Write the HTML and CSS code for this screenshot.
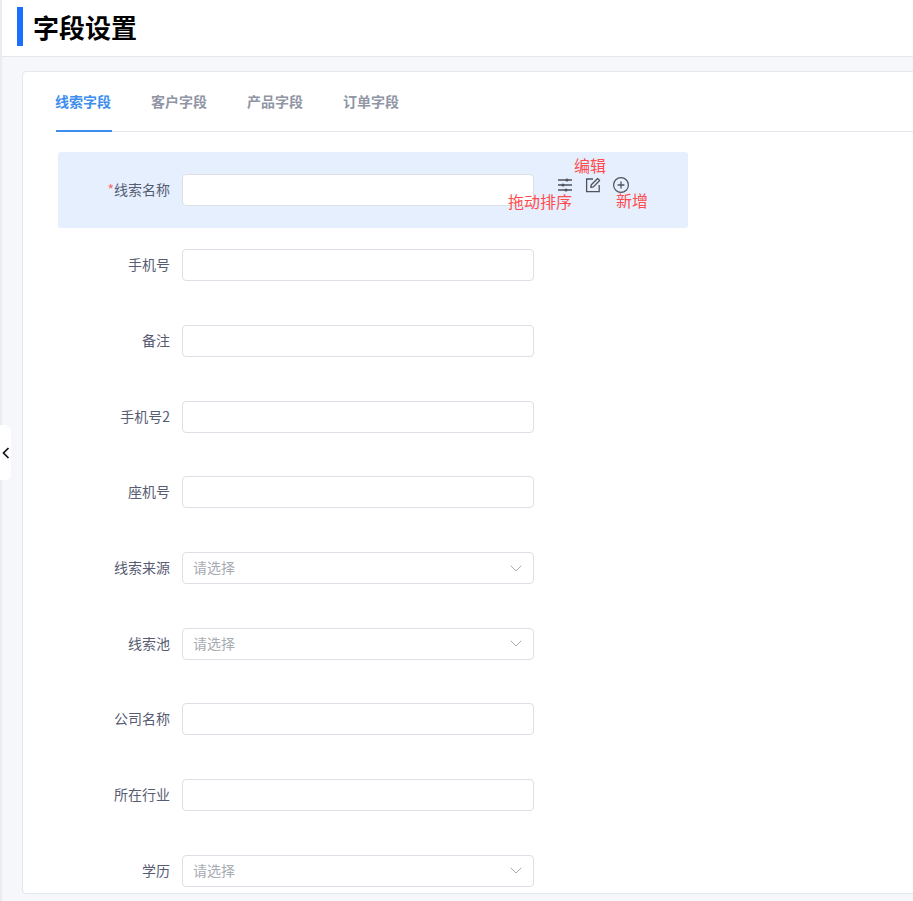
FILE: index.html
```html
<!DOCTYPE html>
<html lang="zh-CN">
<head>
<meta charset="utf-8">
<title>字段设置</title>
<link rel="stylesheet" href="styles.css">
</head>
<body>
<div class="app">
  <header class="page-head">
    <span class="head-bar"></span>
    <h1 class="page-title">字段设置</h1>
  </header>
  <main class="content">
    <section class="card">
      <nav class="tabs">
        <a class="tab active">线索字段</a>
        <a class="tab">客户字段</a>
        <a class="tab">产品字段</a>
        <a class="tab">订单字段</a>
      </nav>
      <div class="form">
        <div class="row highlight">
          <label class="label"><span class="req">*</span>线索名称</label>
          <div class="input"></div>
          <div class="tools">
            <svg class="tool" width="16" height="16" viewBox="0 0 16 16" fill="none" stroke="#50535c" stroke-width="1.3"><path d="M1 3h14M1 8h14M1 13h14"/><circle cx="10" cy="3" r="1.6" fill="#50535c" stroke="none"/><circle cx="6" cy="8" r="1.6" fill="#50535c" stroke="none"/><circle cx="9" cy="13" r="1.6" fill="#50535c" stroke="none"/></svg>
            <svg class="tool" width="16" height="16" viewBox="0 0 16 16" fill="none" stroke="#50535c" stroke-width="1.3"><path d="M8 2H1.6v12.6h12.6V8"/><path d="M5.8 10.4l.5-2.6L12.6 1.5l2 2-6.2 6.4z" stroke-linejoin="round"/></svg>
            <svg class="tool" width="16" height="16" viewBox="0 0 16 16" fill="none" stroke="#50535c" stroke-width="1.2"><circle cx="8" cy="8" r="7.4"/><path d="M8 4.6v6.8M4.6 8h6.8" stroke-width="1.3"/></svg>
          </div>
          <span class="note note-edit">编辑</span>
          <span class="note note-drag">拖动排序</span>
          <span class="note note-add">新增</span>
        </div>
        <div class="row"><label class="label">手机号</label><div class="input"></div></div>
        <div class="row"><label class="label">备注</label><div class="input"></div></div>
        <div class="row"><label class="label">手机号2</label><div class="input"></div></div>
        <div class="row"><label class="label">座机号</label><div class="input"></div></div>
        <div class="row"><label class="label">线索来源</label><div class="input select"><span class="placeholder">请选择</span><svg class="caret" width="12" height="7" viewBox="0 0 12 7" fill="none" stroke="#a8abb2" stroke-width="1"><path d="M.7.7L6 6l5.3-5.3"/></svg></div></div>
        <div class="row"><label class="label">线索池</label><div class="input select"><span class="placeholder">请选择</span><svg class="caret" width="12" height="7" viewBox="0 0 12 7" fill="none" stroke="#a8abb2" stroke-width="1"><path d="M.7.7L6 6l5.3-5.3"/></svg></div></div>
        <div class="row"><label class="label">公司名称</label><div class="input"></div></div>
        <div class="row"><label class="label">所在行业</label><div class="input"></div></div>
        <div class="row"><label class="label">学历</label><div class="input select"><span class="placeholder">请选择</span><svg class="caret" width="12" height="7" viewBox="0 0 12 7" fill="none" stroke="#a8abb2" stroke-width="1"><path d="M.7.7L6 6l5.3-5.3"/></svg></div></div>
      </div>
    </section>
  </main>
  <button class="collapse" type="button" aria-label="收起">
    <svg width="8" height="12" viewBox="0 0 8 12" fill="none" stroke="#111" stroke-width="1.7"><path d="M6.5 1L1.5 6l5 5"/></svg>
  </button>
</div>
</body>
</html>
```
FILE: styles.css
```css
* { box-sizing: border-box; }
html, body { margin: 0; height: 100%; overflow: hidden; }
body {
  font-family: "Noto Sans CJK SC", "Noto Sans", sans-serif;
  font-size: 14px;
  background: #f5f7fa;
}
.app {
  position: relative;
  height: 901px;
  border-left: 2px solid #e9ecf1;
  display: flex;
  flex-direction: column;
}
.page-head {
  height: 57px;
  flex: none;
  background: #fff;
  border-bottom: 1px solid #e4e7ed;
  display: flex;
  align-items: flex-start;
  padding: 7px 0 0 15px;
}
.head-bar { width: 6px; height: 39px; background: #1a6fff; flex: none; }
.page-title {
  margin: 0 0 0 10px;
  font-size: 26px;
  line-height: 39px;
  font-weight: 700;
  color: #000;
}
.content { flex: 1; padding: 14px 0 7px 20px; min-height: 0; }
.card {
  height: 100%;
  width: 900px;
  background: #fff;
  border: 1px solid #e4e7ed;
  border-radius: 4px;
  overflow: hidden;
  padding: 0 0 0 33px;
}
.tabs {
  display: flex;
  gap: 40px;
  height: 60px;
  border-bottom: 1px solid #e4e7ed;
}
.tab {
  height: 60px;
  line-height: 59px;
  font-size: 14px;
  font-weight: 700;
  color: #9096a5;
  width: 56px;
  text-indent: -1px;
  white-space: nowrap;
}
.tab.active { color: #3d8eef; border-bottom: 2px solid #3d8eef; }
.form { padding: 20px 0 0 2px; width: 632px; }
.row {
  position: relative;
  height: 75.67px;
  display: flex;
  align-items: center;
}
.highlight { background: #e5effe; border-radius: 3px; }
.label {
  width: 112px;
  margin-top: -2px;
  text-align: right;
  color: #575c72;
  line-height: 20px;
  white-space: nowrap;
}
.req { color: #f56c6c; }
.input {
  width: 352px;
  height: 32px;
  margin-left: 12px;
  background: #fff;
  border: 1px solid #dcdfe6;
  border-radius: 4px;
  flex: none;
}
.select {
  display: flex;
  align-items: center;
  justify-content: space-between;
  padding: 0 11px 0 10px;
}
.placeholder { color: #a8abb2; margin-top: -2px; }
.tools {
  display: flex;
  gap: 12px;
  margin: -9px 0 0 23px;
}
.note {
  position: absolute;
  color: #ff4d4f;
  font-size: 16px;
  line-height: 22px;
  white-space: nowrap;
}
.note-edit { left: 516px; top: 2px; }
.note-drag { left: 450px; top: 38px; }
.note-add { left: 558px; top: 37px; }
.collapse {
  position: absolute;
  left: -2px;
  top: 425px;
  width: 11px;
  height: 55px;
  padding: 0;
  border: 0;
  background: #fff;
  border-radius: 0 6px 6px 0;
  display: flex;
  align-items: center;
  justify-content: center;
}
```
